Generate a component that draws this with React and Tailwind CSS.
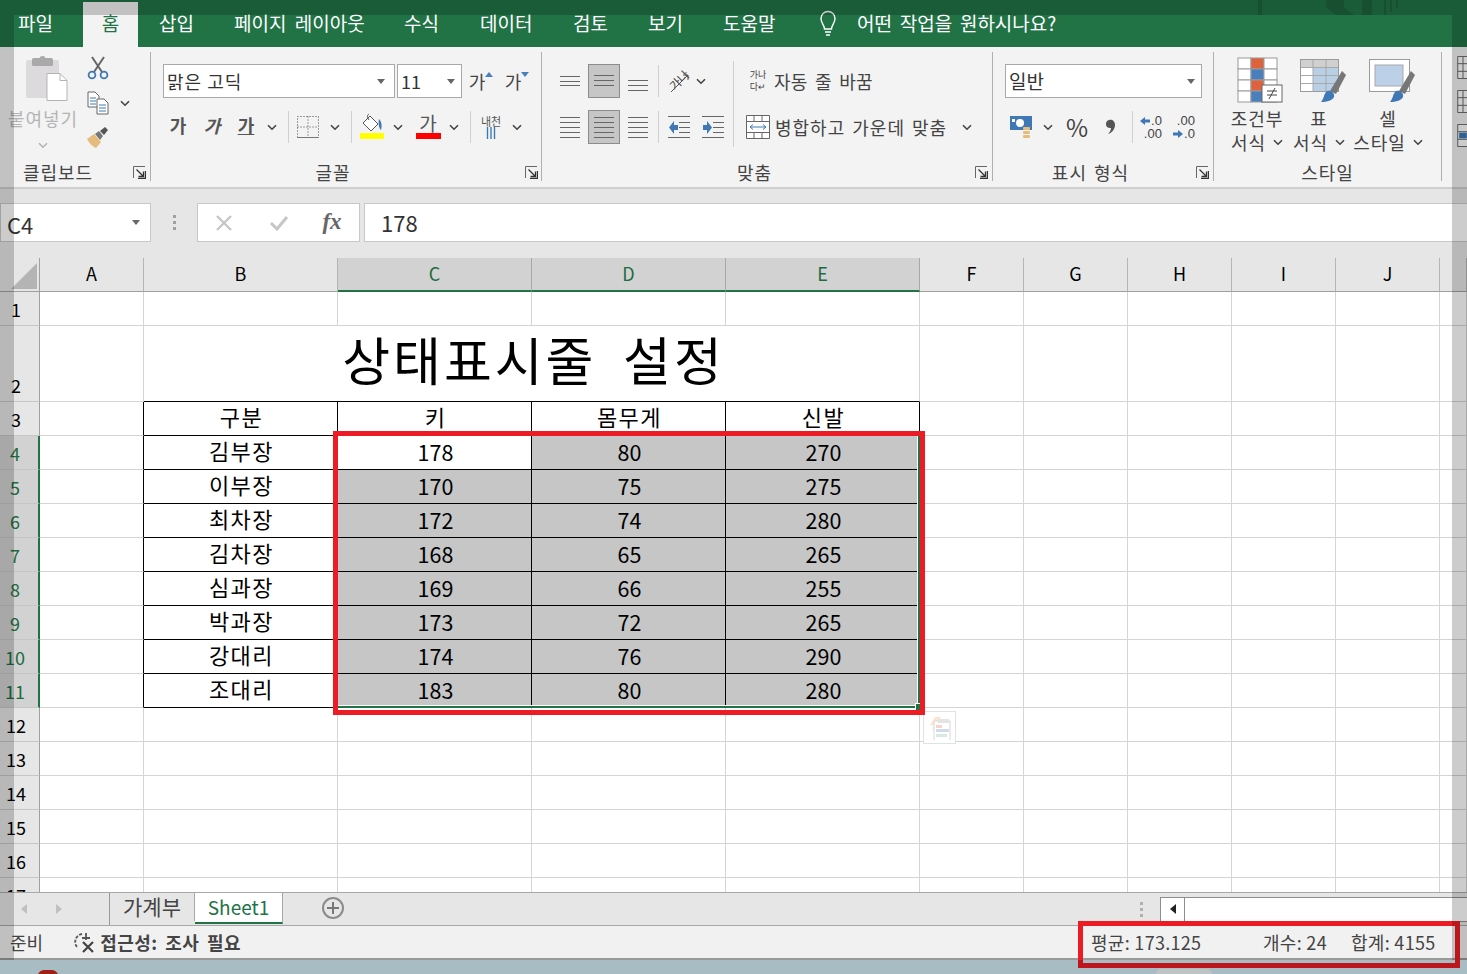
import React from "react";

const FONT = { fontFamily: '"Noto Sans CJK KR", "Liberation Sans", sans-serif' };

const rowHeights = [34, 76, 34, 34, 34, 34, 34, 34, 34, 34, 34, 34, 34, 34, 34, 34, 34];
const columns = ["A", "B", "C", "D", "E", "F", "G", "H", "I", "J", ""];
const tableHead = ["구분", "키", "몸무게", "신발"];
const tableRows = [
  ["김부장", 178, 80, 270],
  ["이부장", 170, 75, 275],
  ["최차장", 172, 74, 280],
  ["김차장", 168, 65, 265],
  ["심과장", 169, 66, 255],
  ["박과장", 173, 72, 265],
  ["강대리", 174, 76, 290],
  ["조대리", 183, 80, 280],
];
const tabs = [
  ["파일", "w-[83px] pl-[18px]"],
  ["홈", "w-[55px] justify-center bg-[#f3f3f3] !text-[#217346]"],
  ["삽입", "w-[75px] pl-[21px]"],
  ["페이지 레이아웃", "w-[171px] pl-[21px]"],
  ["수식", "w-[76px] pl-[20px]"],
  ["데이터", "w-[92px] pl-[20px]"],
  ["검토", "w-[80px] pl-[21px]"],
  ["보기", "w-[76px] pl-[16px]"],
  ["도움말", "w-[95px] pl-[15px]"],
];

function Chev({ color = "#444" }) {
  return (
    <svg width="10" height="7" viewBox="0 0 10 7" className="shrink-0">
      <path d="M1 1.2l4 4 4-4" fill="none" stroke={color} strokeWidth="1.6" />
    </svg>
  );
}

function Slot({ className = "", children }) {
  return <div className={"flex h-full shrink-0 items-center justify-center " + className}>{children}</div>;
}

function Sep({ className = "" }) {
  return (
    <div className={"flex h-full shrink-0 items-center justify-center " + className}>
      <div className="h-[32px] w-px bg-[#d0d0d0]" />
    </div>
  );
}

function Launcher() {
  return (
    <svg width="13" height="13" viewBox="0 0 13 13">
      <path d="M.5 12V.5H12" fill="none" stroke="#666" />
      <path d="M12.5 5v7.500H5" fill="none" stroke="#333" strokeWidth="1.4" />
      <path d="M3.500 3.500l6.500 6.500M10.500 5.500v5h-5" fill="none" stroke="#333" strokeWidth="1.3" />
    </svg>
  );
}

function DropArrow() {
  return <span className="h-0 w-0 border-x-[4px] border-t-[5px] border-x-transparent border-t-[#666]" />;
}

function Lines({ rows, color = "#666", w = 24, h = 24 }) {
  return (
    <svg width={w} height={h} viewBox={`0 0 ${w} ${h}`}>
      {rows.map((r, i) => (
        <path key={i} d={`M${r[0]} ${r[2] + 0.5}H${r[1]}`} stroke={color} strokeWidth="1" />
      ))}
    </svg>
  );
}

function Selected({ children }) {
  return <div className="ml-[3px] flex h-[34px] w-[32px] shrink-0 items-center justify-center border border-[#8c8c8c] bg-[#c6c6c6]">{children}</div>;
}

function GroupLabel({ children, launcherClass = "" }) {
  return (
    <div className="mt-auto flex h-[18px] w-full items-center">
      <div className="flex-1 text-center text-[18px] leading-none tracking-[1px] text-[#444]">{children}</div>
      <div className={"flex shrink-0 items-center " + launcherClass}>
        <Launcher />
      </div>
    </div>
  );
}

function PasteIcon() {
  return (
    <svg width="42" height="46" viewBox="0 0 42 46">
      <rect x="0" y="4" width="33" height="38" rx="2" fill="#dcdadc" />
      <rect x="6" y="2" width="21" height="8" rx="1.5" fill="#a9a9a9" />
      <circle cx="16.5" cy="3" r="3" fill="#a9a9a9" />
      <path d="M21 17.5h13l7 7v20H21z" fill="#fff" stroke="#b5b5b5" />
      <path d="M34 17.5v7h7" fill="none" stroke="#b5b5b5" />
    </svg>
  );
}

function ScissorsIcon() {
  return (
    <svg width="22" height="24" viewBox="0 0 22 24">
      <path d="M5 1l10 15M17 1L7 16" stroke="#666" strokeWidth="2" fill="none" />
      <circle cx="5" cy="19" r="3.4" fill="none" stroke="#3f78b5" strokeWidth="1.8" />
      <circle cx="17" cy="19" r="3.4" fill="none" stroke="#3f78b5" strokeWidth="1.8" />
    </svg>
  );
}

function CopyIcon() {
  return (
    <svg width="22" height="24" viewBox="0 0 22 24">
      <path d="M1 1h7l4 4v11H1z" fill="#fff" stroke="#666" />
      <path d="M3 7h6M3 10h6M3 13h6" stroke="#3f78b5" />
      <path d="M10 8h7l4 4v11H10z" fill="#fff" stroke="#666" />
      <path d="M12 14h7M12 17h7M12 20h7" stroke="#3f78b5" />
    </svg>
  );
}

function BrushIcon() {
  return (
    <svg width="24" height="22" viewBox="0 0 24 22">
      <path d="M1 13l7-5 7 8-5 6c-3-1-7-5-9-9z" fill="#e6bc7c" />
      <path d="M9 8l4-3 4 5-3 4z" fill="#777" />
      <path d="M14 5l5-4 3 3-4 5z" fill="#555" />
    </svg>
  );
}

function BordersIcon() {
  return (
    <svg width="22" height="22" viewBox="0 0 22 22">
      <path d="M.5.5h21v21H.5zM11 .5v21M.5 11h21" fill="none" stroke="#444" strokeDasharray="1 2" />
      <path d="M.5 21.500h21" stroke="#777" />
    </svg>
  );
}

function FillIcon() {
  return (
    <div className="flex flex-col items-center">
      <svg width="24" height="20" viewBox="0 0 24 20">
        <path d="M10 3l8 8-7 7-8-8z" fill="#fff" stroke="#555" />
        <path d="M9 1c-2 1-2 3 0 6" fill="none" stroke="#555" />
        <path d="M19 6c3 3 3 7 2 11-2-2-3-6-2-11z" fill="#3f78b5" />
      </svg>
      <div className="h-[6px] w-[24px] bg-[#ffff00]" />
    </div>
  );
}

function OrientIcon() {
  return (
    <div className="relative h-[26px] w-[26px]">
      <span className="absolute left-[1px] top-[1px] -rotate-45 text-[12px] leading-[22px] text-[#444]">가나</span>
      <svg className="absolute left-0 top-0" width="26" height="26" viewBox="0 0 26 26">
        <path d="M4 24L21 7M21 12V7h-5" fill="none" stroke="#555" />
      </svg>
    </div>
  );
}

function IndentIcon({ flip }) {
  return (
    <svg width="24" height="24" viewBox="0 0 24 24">
      <path d="M1 1.500h22M12 7.500h11M12 12.500h11M12 17.500h11M1 22.500h22" stroke="#666" />
      {flip ? (
        <path d="M2 10h4V6l5 6.500L6 19v-4H2z" fill="#3f78b5" />
      ) : (
        <path d="M11 10H7V6l-5 6.500L7 19v-4h4z" fill="#3f78b5" />
      )}
    </svg>
  );
}

function MergeIcon() {
  return (
    <svg width="24" height="24" viewBox="0 0 24 24">
      <path d="M.5.5h23v23H.5zM.5 6.500h23M.5 17.500h23M8 .5v6M16 .5v6M8 17.500v6M16 17.500v6" fill="#fff" stroke="#666" />
      <path d="M4 12h16M7 9.500L4 12l3 2.500M17 9.500l3 2.500-3 2.500" fill="none" stroke="#3f78b5" />
    </svg>
  );
}

function CurrencyIcon() {
  return (
    <svg width="24" height="24" viewBox="0 0 24 24">
      <rect x="1" y="1" width="22" height="14" fill="#3f78b5" />
      <circle cx="11" cy="8" r="4" fill="#fff" />
      <rect x="3" y="4" width="3" height="3" fill="#fff" />
      <rect x="14" y="12" width="7" height="3" rx="1" fill="#e6bc7c" />
      <rect x="14" y="16" width="7" height="3" rx="1" fill="#e6bc7c" />
      <rect x="14" y="20" width="7" height="3" rx="1" fill="#e6bc7c" />
    </svg>
  );
}

function CommaIcon() {
  return (
    <svg width="10" height="16" viewBox="0 0 10 16">
      <path d="M3 1c3-1 6 1 6 5 0 4-3 8-7 9 2-2 3-4 3-6-3 0-5-1-5-4 0-2 1-3.500 3-4z" fill="#555" />
    </svg>
  );
}

function ArrowDecimal({ dir }) {
  return (
    <svg width="10" height="10" viewBox="0 0 10 10" className="inline-block">
      {dir === "left" ? (
        <path d="M10 3.500H5V1L0 5l5 4V6.500h5z" fill="#3f78b5" />
      ) : (
        <path d="M0 3.500h5V1l5 4-5 4V6.500H0z" fill="#3f78b5" />
      )}
    </svg>
  );
}

function CondIcon() {
  const cells = [];
  for (let y = 0; y < 4; y++) {
    for (let x = 0; x < 3; x++) {
      let fill = "#fff";
      if (x === 1 && (y === 0 || y === 2)) fill = "#e0623c";
      if (x === 1 && y === 1) fill = "#4a7fbd";
      if (x === 1 && y === 3) fill = "#4a7fbd";
      cells.push(<rect key={x + "-" + y} x={1 + x * 13} y={1 + y * 11} width="13" height="11" fill={fill} stroke="#9a9a9a" />);
    }
  }
  return (
    <svg width="48" height="46" viewBox="0 0 48 46">
      {cells}
      <rect x="25" y="28" width="20" height="17" fill="#fff" stroke="#666" />
      <path d="M30 34h10M30 38h10M38 31l-6 11" fill="none" stroke="#444" />
    </svg>
  );
}

function TableStyleIcon() {
  return (
    <svg width="46" height="44" viewBox="0 0 46 44">
      <rect x=".5" y=".5" width="38" height="32" fill="#fff" stroke="#9a9a9a" />
      <rect x="1" y="1" width="37" height="7" fill="#d0d0d0" />
      <rect x="13" y="8" width="25" height="24" fill="#b9cfe6" />
      <path d="M1 8.500h37M1 16.500h37M1 24.500h37M13 1v32M26 1v32" stroke="#a9a9a9" />
      <path d="M42 12l4 4-10 19-6-3z" fill="#777" />
      <path d="M27 32c4-1 8 2 7 6-1 3-7 5-13 5 3-3 3-9 6-11z" fill="#3f78b5" />
    </svg>
  );
}

function CellStyleIcon() {
  return (
    <svg width="46" height="44" viewBox="0 0 46 44">
      <rect x=".5" y=".5" width="40" height="32" fill="#fff" stroke="#9a9a9a" />
      <rect x="6" y="6" width="28" height="21" fill="#bcd1e8" stroke="#a9a9a9" />
      <path d="M42 12l4 4-10 19-6-3z" fill="#777" />
      <path d="M27 32c4-1 8 2 7 6-1 3-7 5-13 5 3-3 3-9 6-11z" fill="#3f78b5" />
    </svg>
  );
}

function StyleButton({ icon, top, bottom, className = "" }) {
  return (
    <div className={"flex flex-col items-center text-[18px] leading-[24px] tracking-[1px] text-[#444] " + className}>
      <div className="flex h-[46px] items-end">{icon}</div>
      <div className="mr-[8px] mt-[3px] whitespace-nowrap">{top}</div>
      <div className="mr-[8px] flex items-center gap-[7px] whitespace-nowrap">
        {bottom}
        <Chev />
      </div>
    </div>
  );
}

function Ribbon() {
  return (
    <div className="flex h-[140px] shrink-0 bg-[#f3f3f3] text-[#444]">
      {/* 클립보드 */}
      <div className="mt-[5px] flex h-[129px] w-[151px] shrink-0 flex-col border-r border-[#b0b0b0]">
        <div className="flex">
          <div className="flex w-[86px] flex-col items-center">
            <div className="ml-[7px] mt-[4px]">
              <PasteIcon />
            </div>
            <div className="mt-[6px] whitespace-nowrap text-[18px] leading-[20px] tracking-[1px] text-[#b4b4b4]">붙여넣기</div>
            <div className="mt-[14px]">
              <Chev color="#b4b4b4" />
            </div>
          </div>
          <div className="flex flex-col">
            <div className="mt-[4px] flex h-[24px] items-center pl-[1px]">
              <ScissorsIcon />
            </div>
            <div className="mt-[11px] flex h-[24px] items-center gap-[11px] pl-[1px]">
              <CopyIcon />
              <Chev />
            </div>
            <div className="mt-[11px] h-[22px]">
              <BrushIcon />
            </div>
          </div>
        </div>
        <GroupLabel launcherClass="pr-[4px]">
          <span className="mr-[17px]">클립보드</span>
        </GroupLabel>
      </div>

      {/* 글꼴 */}
      <div className="mt-[5px] flex h-[129px] w-[391px] shrink-0 flex-col border-r border-[#b0b0b0] pt-[12px]">
        <div className="flex h-[34px] pl-[12px]">
          <div className="flex w-[232px] items-center justify-between border border-[#a9a9a9] bg-white pl-[3px] pr-[9px] text-[18px] tracking-[1px] text-[#333]">
            맑은 고딕
            <DropArrow />
          </div>
          <div className="ml-[2px] flex w-[65px] items-center justify-between border border-[#a9a9a9] bg-white pl-[3px] pr-[6px] text-[18px] text-[#333]">
            11
            <DropArrow />
          </div>
          <Slot className="ml-[8px] w-[22px]">
            <span className="text-[18px]">가</span>
            <span className="mb-[14px] h-0 w-0 border-x-[4px] border-b-[5px] border-x-transparent border-b-[#4a7fbd]" />
          </Slot>
          <Slot className="ml-[13px] w-[24px]">
            <span className="text-[18px]">가</span>
            <span className="mb-[14px] h-0 w-0 border-x-[4px] border-t-[5px] border-x-transparent border-t-[#4a7fbd]" />
          </Slot>
        </div>
        <div className="mt-[12px] flex h-[34px] pl-[10px] text-[#555]">
          <Slot className="w-[34px] pb-[3px] text-[18px] font-bold">가</Slot>
          <Slot className="w-[34px] pb-[3px] text-[18px] font-bold italic">가</Slot>
          <Slot className="w-[34px] pb-[3px] text-[18px] font-bold underline">가</Slot>
          <Slot className="w-[18px]">
            <Chev />
          </Slot>
          <Sep className="w-[14px]" />
          <Slot className="w-[26px]">
            <BordersIcon />
          </Slot>
          <Slot className="w-[28px]">
            <Chev />
          </Slot>
          <Sep className="w-[4px]" />
          <Slot className="w-[38px] pb-[3px]">
            <FillIcon />
          </Slot>
          <Slot className="w-[14px]">
            <Chev />
          </Slot>
          <Slot className="ml-[1px] w-[44px] pb-[3px]">
            <div className="flex flex-col items-center">
              <span className="h-[20px] text-[19px] leading-[20px]">가</span>
              <div className="h-[6px] w-[25px] bg-[#ff0000]" />
            </div>
          </Slot>
          <Slot className="w-[8px]">
            <Chev />
          </Slot>
          <Sep className="w-[24px]" />
          <Slot className="w-[18px]">
            <div className="flex flex-col items-center">
              <span className="h-[12px] whitespace-nowrap text-[11px] leading-[12px]">내천</span>
              <svg width="10" height="12" viewBox="0 0 10 12">
                <path d="M1.500 0v12M5 0v12M8.500 0v12" stroke="#3f78b5" strokeWidth="1.4" />
              </svg>
            </div>
          </Slot>
          <Slot className="w-[34px]">
            <Chev />
          </Slot>
        </div>
        <GroupLabel launcherClass="pr-[3px]">
          <span className="mr-[10px]">글꼴</span>
        </GroupLabel>
      </div>

      {/* 맞춤 */}
      <div className="mt-[5px] flex h-[129px] w-[451px] shrink-0 flex-col border-r border-[#b0b0b0] pt-[12px]">
        <div className="flex">
          <div className="flex w-[191px] flex-col">
            <div className="flex h-[34px] pl-[13px]">
              <Slot className="w-[30px]">
                <Lines rows={[[2, 22, 5], [2, 22, 10], [2, 22, 14]]} h={20} />
              </Slot>
              <Selected>
                <Lines rows={[[2, 22, 6], [2, 22, 11], [2, 22, 16]]} />
              </Selected>
              <Slot className="w-[36px]">
                <Lines rows={[[2, 22, 11], [2, 22, 16], [2, 22, 21]]} />
              </Slot>
              <Sep className="w-[4px]" />
              <Slot className="ml-[7px] w-[26px]">
                <OrientIcon />
              </Slot>
              <Slot className="w-[16px]">
                <Chev />
              </Slot>
            </div>
            <div className="mt-[12px] flex h-[34px] pl-[13px]">
              <Slot className="w-[30px]">
                <Lines rows={[[2, 22, 2], [2, 22, 7], [2, 22, 12], [2, 22, 17], [2, 22, 22]]} />
              </Slot>
              <Selected>
                <Lines rows={[[2, 22, 2], [2, 22, 7], [2, 22, 12], [2, 22, 17], [2, 22, 22]]} />
              </Selected>
              <Slot className="w-[36px]">
                <Lines rows={[[2, 22, 2], [2, 22, 7], [2, 22, 12], [2, 22, 17], [2, 22, 22]]} />
              </Slot>
              <Sep className="w-[4px]" />
              <Slot className="ml-[7px] w-[24px]">
                <IndentIcon />
              </Slot>
              <Slot className="ml-[10px] w-[24px]">
                <IndentIcon flip />
              </Slot>
            </div>
          </div>
          <div className="mt-[-3px] h-[86px] w-px bg-[#d0d0d0]" />
          <div className="flex flex-col">
            <div className="flex h-[34px] pl-[13px]">
              <Slot className="w-[22px]">
                <div className="flex flex-col text-[9px] leading-[12px]">
                  <span>가나</span>
                  <span>다↵</span>
                </div>
              </Slot>
              <div className="ml-[5px] flex items-center whitespace-nowrap text-[18px] tracking-[0.3px] [word-spacing:3px]">자동 줄 바꿈</div>
            </div>
            <div className="mt-[12px] flex h-[34px] pl-[12px]">
              <Slot className="w-[24px]">
                <MergeIcon />
              </Slot>
              <div className="ml-[5px] flex w-[176px] items-center whitespace-nowrap text-[18px] tracking-[1px] [word-spacing:2px]">병합하고 가운데 맞춤</div>
              <Slot className="ml-[11px] w-[10px]">
                <Chev />
              </Slot>
            </div>
          </div>
        </div>
        <GroupLabel launcherClass="pr-[4px]">
          <span className="mr-[8px]">맞춤</span>
        </GroupLabel>
      </div>

      {/* 표시 형식 */}
      <div className="mt-[5px] flex h-[129px] w-[221px] shrink-0 flex-col border-r border-[#b0b0b0] pt-[12px]">
        <div className="flex h-[34px] pl-[12px]">
          <div className="flex w-[197px] items-center justify-between border border-[#a9a9a9] bg-white pl-[3px] pr-[6px] text-[19px] text-[#333]">
            일반
            <DropArrow />
          </div>
        </div>
        <div className="mt-[12px] flex h-[34px] pl-[15px]">
          <Slot className="w-[26px]">
            <CurrencyIcon />
          </Slot>
          <Slot className="ml-[8px] w-[12px]">
            <Chev />
          </Slot>
          <Slot className="ml-[11px] w-[24px] text-[24px]">%</Slot>
          <Slot className="ml-[10px] w-[24px]">
            <CommaIcon />
          </Slot>
          <Sep className="ml-[7px] w-[4px]" />
          <Slot className="ml-[4px] w-[26px]">
            <div className="text-right font-['Liberation_Sans'] text-[13px] leading-[13px]">
              <div className="flex items-center justify-end gap-px">
                <ArrowDecimal dir="left" />
                .0
              </div>
              <div>.00</div>
            </div>
          </Slot>
          <Slot className="ml-[7px] w-[26px]">
            <div className="text-right font-['Liberation_Sans'] text-[13px] leading-[13px]">
              <div>.00</div>
              <div className="flex items-center justify-end gap-px">
                <ArrowDecimal dir="right" />
                .0
              </div>
            </div>
          </Slot>
        </div>
        <GroupLabel launcherClass="pr-[4px]">
          <span className="mr-[8px] [word-spacing:2px]">표시 형식</span>
        </GroupLabel>
      </div>

      {/* 스타일 */}
      <div className="mt-[5px] flex h-[129px] w-[228px] shrink-0 flex-col border-r border-[#b0b0b0]">
        <div className="flex pl-[16px] pt-[5px]">
          <StyleButton className="w-[62px]" icon={<CondIcon />} top="조건부" bottom="서식" />
          <StyleButton className="w-[62px]" icon={<TableStyleIcon />} top="표" bottom="서식" />
          <StyleButton className="ml-[5px] w-[66px]" icon={<CellStyleIcon />} top="셀" bottom="스타일" />
        </div>
        <div className="mt-auto flex h-[18px] items-center justify-center text-[18px] leading-none tracking-[1px]">스타일</div>
      </div>

      {/* 잘린 그룹 */}
      <div className="ml-[15px] mt-[9px] flex flex-col gap-[11px]">
        <svg width="12" height="23" viewBox="0 0 12 24">
          <path d="M.5.5h11v23H.5zM.5 8h11M.5 16h11M6 .5v23" fill="#fff" stroke="#666" />
        </svg>
        <svg width="12" height="23" viewBox="0 0 12 24">
          <path d="M.5.5h11v23H.5zM.5 8h11M.5 16h11M6 .5v23" fill="#fff" stroke="#666" />
        </svg>
        <svg width="12" height="23" viewBox="0 0 12 24">
          <path d="M.5.5h11v23H.5zM.5 8h11M.5 16h11" fill="#fff" stroke="#666" />
          <rect x="2" y="9" width="8" height="6" fill="#3f78b5" />
        </svg>
      </div>
    </div>
  );
}

function FormulaBar() {
  return (
    <div className="flex h-[71px] shrink-0 items-start border-t-2 border-[#cfcfcf] bg-[#e6e6e6] pt-[14px]">
      <div className="flex h-[39px] w-[151px] items-center justify-between border border-[#c8c8c8] bg-white pl-[6px] pr-[10px] text-[22px] text-[#333]">
        <span className="mt-[3px]">C4</span>
        <DropArrow />
      </div>
      <div className="flex h-[39px] w-[46px] flex-col items-center justify-center gap-[3px]">
        <span className="h-[3px] w-[3px] bg-[#a0a0a0]" />
        <span className="h-[3px] w-[3px] bg-[#a0a0a0]" />
        <span className="h-[3px] w-[3px] bg-[#a0a0a0]" />
      </div>
      <div className="flex h-[39px] w-[163px] items-center border border-[#c8c8c8] bg-white">
        <Slot className="ml-[13px] w-[26px]">
          <svg width="18" height="18" viewBox="0 0 18 18">
            <path d="M2 2l14 14M16 2L2 16" stroke="#c6c6c6" strokeWidth="2.4" />
          </svg>
        </Slot>
        <Slot className="ml-[29px] w-[26px]">
          <svg width="20" height="18" viewBox="0 0 20 18">
            <path d="M2 9l6 6L18 3" fill="none" stroke="#c6c6c6" strokeWidth="3" />
          </svg>
        </Slot>
        <Slot className="ml-[27px] w-[26px] font-['Liberation_Serif'] text-[23px] font-bold italic text-[#666]">fx</Slot>
      </div>
      <div className="ml-[4px] flex h-[39px] flex-1 items-center border-y border-l border-[#c8c8c8] bg-white pl-[16px] text-[22px] text-[#333]">
        178
      </div>
    </div>
  );
}

function Sheet() {
  const rows = rowHeights.map((h, i) => ({ h, n: i + 1 }));
  return (
    <div className="relative h-[634px] shrink-0 overflow-hidden bg-white text-black">
      <div className="grid h-[34px] grid-cols-[40px_104px_194px_194px_194px_194px_104px_104px_104px_104px_104px_1fr]">
        <div className="flex items-end justify-end border-b border-r border-[#a0a0a0] bg-[#e6e6e6] pb-[2px] pr-[2px]">
          <div className="h-0 w-0 border-b-[26px] border-l-[26px] border-b-[#b4b4b4] border-l-transparent" />
        </div>
        {columns.map((c) => {
          const on = c === "C" || c === "D" || c === "E";
          return (
            <div
              key={c || "k"}
              className={
                on
                  ? "flex items-center justify-center border-b-2 border-r border-b-[#217346] border-r-[#a8a8a8] bg-[#d2d2d2] pb-[1px] text-[18px] text-[#1d6b40]"
                  : "flex items-center justify-center border-b border-r border-b-[#a0a0a0] border-r-[#b4b4b4] bg-[#e6e6e6] pb-[2px] text-[18px]"
              }
            >
              {c}
            </div>
          );
        })}
      </div>
      {rows.map((r) => (
        <SheetRow key={r.n} n={r.n} />
      ))}
      {/* 선택 영역 */}
      <div className="absolute left-[337px] top-[177px] h-[273px] w-[583px] border-b-2 border-r-2 border-[#217346] shadow-[inset_-1px_-1px_0_#fff]" />
      <div className="absolute left-[915px] top-[445px] h-[7px] w-[6px] border-l border-t border-white bg-[#217346]" />
      {/* 빠른 분석 */}
      <div className="absolute left-[923px] top-[453px] flex h-[33px] w-[33px] items-center justify-center border border-[#dce4e4] bg-white">
        <svg width="22" height="24" viewBox="0 0 22 24">
          <path d="M6 1h6L8 7h4L3 15l2-6H1z" fill="#fbe6cc" />
          <path d="M5 5h16v20H5z" fill="#fff" stroke="#d8d8d8" />
          <rect x="9" y="3" width="11" height="4" fill="#e4e4e4" />
          <rect x="7" y="9" width="6" height="3" fill="#f8d4c8" />
          <rect x="7" y="13" width="13" height="3" fill="#d0dcec" />
          <rect x="7" y="18" width="11" height="3" fill="#d8e8e4" />
        </svg>
      </div>
    </div>
  );
}

function SheetRow({ n }) {
  const sel = n >= 4 && n <= 11;
  const head = n === 3;
  const item = sel ? tableRows[n - 4] : null;
  const rowH = n === 2 ? "h-[76px]" : "h-[34px]";
  const inTable = head || sel;
  const line = "border-[#d4d4d4]";

  return (
    <div className={"grid grid-cols-[40px_104px_194px_194px_194px_194px_104px_104px_104px_104px_104px_1fr] " + rowH}>
      <div
        className={
          sel
            ? "flex items-end justify-center border-b border-r-2 border-b-[#c6c6c6] border-r-[#217346] bg-[#d2d2d2] pb-[1px] pr-[8px] text-[18px] leading-[30px] text-[#1d6b40]"
            : "flex items-end justify-center border-b border-r border-b-[#c6c6c6] border-r-[#a0a0a0] bg-[#e6e6e6] pb-[1px] pr-[7px] text-[18px] leading-[30px]"
        }
      >
        {n}
      </div>
      <div className={"border-b border-r border-b-[#d4d4d4] " + (inTable ? "border-r-black" : "border-r-[#d4d4d4]")} />
      {n === 2 ? (
        <div className="col-span-4 flex items-end justify-center border-b border-r border-b-black border-r-[#d4d4d4] pb-[10px] pl-[4px] text-[52px] leading-[64px] tracking-[3px] [word-spacing:12px]">
          상태표시줄 설정
        </div>
      ) : inTable ? (
        [0, 1, 2, 3].map((c) => {
          const value = head ? tableHead[c] : item[c];
          const gray = sel && c > 0 && !(n === 4 && c === 1);
          const isWord = typeof value === "string";
          return (
            <div
              key={c}
              className={
                "flex justify-center border-b border-r border-black pl-[2px] " +
                (isWord ? "items-start text-[22px] leading-[28px] tracking-[1.5px] " : "items-end pb-[2px] text-[21.5px] leading-[30px] ") +
                (gray ? "bg-[#c6c6c6]" : "bg-white")
              }
            >
              {value}
            </div>
          );
        })
      ) : (
        [0, 1, 2, 3].map((c) => <div key={c} className={"border-b border-r " + line} />)
      )}
      {[0, 1, 2, 3, 4, 5].map((c) => (
        <div key={c} className={"border-b border-r " + line} />
      ))}
    </div>
  );
}

function SheetTabs() {
  return (
    <div className="flex h-[34px] shrink-0 items-start border-y border-[#a8a8a8] bg-[#e6e6e6] text-[#444]">
      <div className="flex h-[32px] w-[110px] items-center border-r border-[#9a9a9a] pl-[21px]">
        <span className="h-0 w-0 border-y-[5px] border-r-[6px] border-y-transparent border-r-[#c0c0c0]" />
        <span className="ml-[29px] h-0 w-0 border-y-[5px] border-l-[6px] border-y-transparent border-l-[#c0c0c0]" />
      </div>
      <div className="flex h-[28px] w-[85px] items-center justify-center border-r border-[#a8a8a8] text-[21px]">가계부</div>
      <div className="flex h-[31px] w-[88px] items-center justify-center border-b-2 border-r border-b-[#217346] border-r-[#a8a8a8] bg-white text-[19px] text-[#217346]">
        Sheet1
      </div>
      <div className="ml-[39px] mt-[4px] flex h-[22px] w-[22px] items-center justify-center rounded-full border-2 border-[#8a8a8a]">
        <svg width="12" height="12" viewBox="0 0 12 12">
          <path d="M6 0v12M0 6h12" stroke="#777" strokeWidth="2" />
        </svg>
      </div>
      <div className="ml-auto flex h-[32px] items-center">
        <div className="flex flex-col gap-[3px]">
          <span className="h-[3px] w-[3px] bg-[#b0b0b0]" />
          <span className="h-[3px] w-[3px] bg-[#b0b0b0]" />
          <span className="h-[3px] w-[3px] bg-[#b0b0b0]" />
        </div>
        <div className="ml-[17px] flex h-[25px] w-[307px] border-y border-l border-[#8e8e8e] bg-white">
          <div className="flex h-full w-[24px] items-center justify-center border-r border-[#8e8e8e]">
            <span className="h-0 w-0 border-y-[5px] border-r-[6px] border-y-transparent border-r-[#222]" />
          </div>
        </div>
      </div>
    </div>
  );
}

function StatusBar() {
  return (
    <div className="flex h-[34px] shrink-0 items-center border-b-2 border-[#9a9a9a] bg-[#f1f1f1] text-[18px] text-[#444]">
      <span className="ml-[10px]">준비</span>
      <svg className="ml-[31px]" width="22" height="22" viewBox="0 0 22 22">
        <path d="M8 3a8 8 0 0 0 -4 14" fill="none" stroke="#555" strokeWidth="1.8" strokeDasharray="3 1.500" />
        <path d="M12 2v7M8 7h8" stroke="#555" strokeWidth="1.8" />
        <path d="M9 11l10 10M19 11L9 21" stroke="#444" strokeWidth="2.2" />
      </svg>
      <span className="ml-[4px] font-bold tracking-[0.5px] [word-spacing:3px]">접근성: 조사 필요</span>
      <span className="ml-auto w-[172px] whitespace-nowrap tracking-[0.3px]">평균: 173.125</span>
      <span className="w-[88px] whitespace-nowrap tracking-[0.3px]">개수: 24</span>
      <span className="w-[116px] whitespace-nowrap tracking-[0.3px]">합계: 4155</span>
    </div>
  );
}

export default function App() {
  return (
    <div className="relative flex h-[974px] w-[1467px] flex-col overflow-hidden bg-[#d3ebf5]" style={FONT}>
      <div className="flex h-[47px] shrink-0 items-end bg-[#217346] text-[19px] text-white [word-spacing:4px]">
        {tabs.map(([label, cls]) => (
          <div key={label} className={"flex h-[45px] shrink-0 items-center pb-[3px] " + cls}>
            {label}
          </div>
        ))}
        <svg className="mb-[9px] ml-[15px] shrink-0" width="20" height="28" viewBox="0 0 20 28">
          <path d="M6.500 19c0-4-3.500-5.500-3.500-10.500a7 7 0 0 1 14 0c0 5-3.500 6.500-3.500 10.500z" fill="none" stroke="#fff" strokeWidth="1.4" />
          <path d="M7 22h6M8 25h4" stroke="#fff" strokeWidth="1.6" />
        </svg>
        <div className="ml-[19px] flex h-[45px] items-center whitespace-nowrap pb-[3px] [word-spacing:3.5px]">어떤 작업을 원하시나요?</div>
      </div>
      <Ribbon />
      <FormulaBar />
      <Sheet />
      <SheetTabs />
      <StatusBar />

      {/* 강조 표시 */}
      <div className="absolute left-[333px] top-[431px] h-[284px] w-[592px] border-[5px] border-[#ed1c24]" />
      <div className="absolute left-[1078px] top-[921px] h-[47px] w-[382px] border-[5px] border-[#ed1c24]" />

      {/* 바탕 화면 */}
      <div className="absolute bottom-[-8px] left-[38px] h-[12px] w-[20px] rounded-full bg-[#c8281e]" />
      <div className="absolute bottom-0 left-[1156px] h-[5px] w-[56px] rounded-t-md bg-[#eef4f6]" />

      {/* 창 그림자 */}
      <div className="absolute left-0 top-0 h-[15px] w-full bg-black/20" />
      <svg className="absolute left-[1250px] top-0" width="160" height="15" viewBox="0 0 160 15">
        <path d="M8 0h4v15H8zM76 0h18v8l10 7H86l-10-8zM112 0h10v15h-10zM134 0h2v15h-2zM140 0h2v12h-2zM146 0h2v8h-2z" fill="#174f30" />
      </svg>
      <div className="absolute left-0 top-[15px] h-[945px] w-[14px] bg-black/20" />
      <div className="absolute right-0 top-[15px] h-[945px] w-[15px] bg-black/20" />
      <div className="absolute bottom-0 left-0 h-[14px] w-full bg-black/20" />
    </div>
  );
}
